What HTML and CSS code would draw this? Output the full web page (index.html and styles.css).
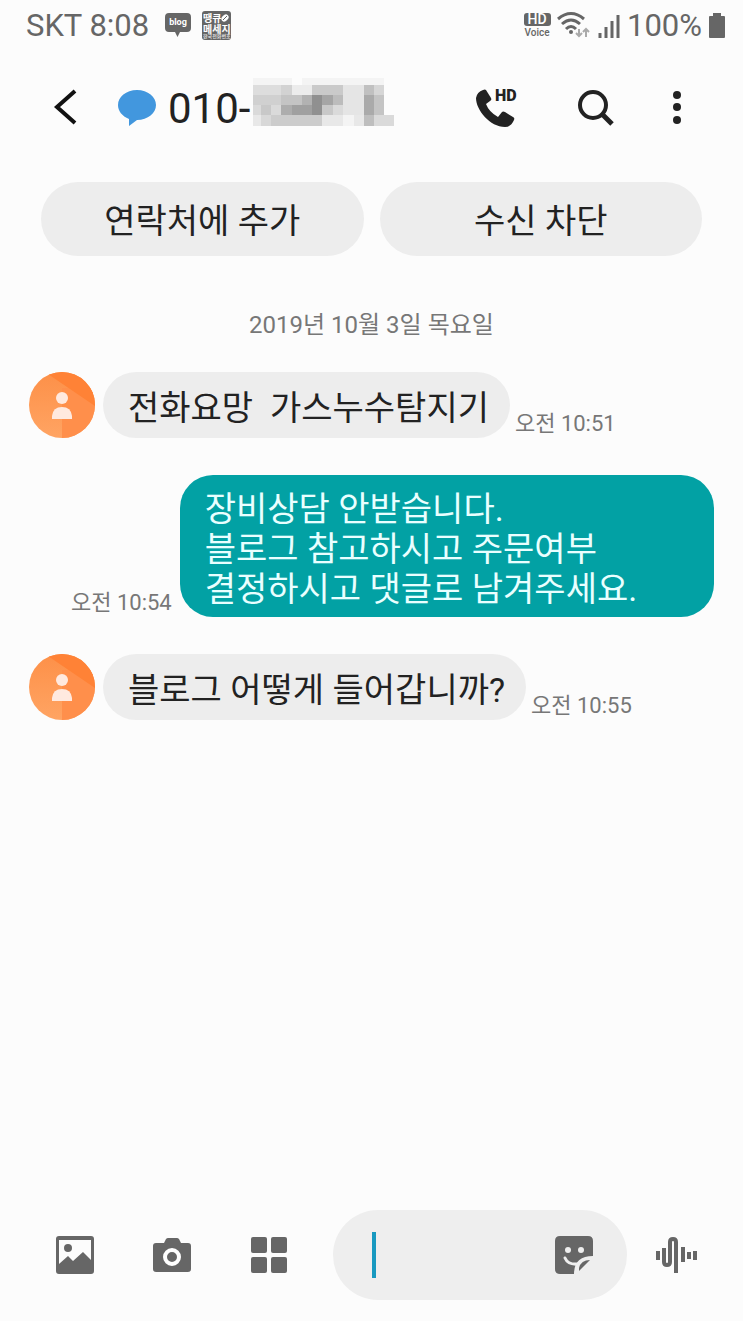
FILE: index.html
```html
<!DOCTYPE html>
<html lang="ko">
<head>
<meta charset="UTF-8">
<meta name="viewport" content="width=device-width, initial-scale=1.0">
<title>메시지</title>
<link rel="stylesheet" href="styles.css">
</head>
<body>

<div class="status-bar">
    <span class="status-text">SKT 8:08</span>
    <svg class="blog-icon" width="28" height="30" viewBox="0 0 28 30" aria-hidden="true">
        <path d="M5 2h18a4 4 0 0 1 4 4v11a4 4 0 0 1-4 4h-7l-2.500 5-2.500-5H5a4 4 0 0 1-4-4V6a4 4 0 0 1 4-4z" fill="#666"/>
        <text x="14" y="14" text-anchor="middle" font-size="9" font-weight="700" fill="#fff">blog</text>
    </svg>
    <svg width="30" height="30" viewBox="0 0 30 30" aria-hidden="true">
        <rect width="29" height="29" x="0" y="0" rx="3" fill="#666"/>
        <text x="1" y="11" font-size="10" font-weight="700" fill="#fff">땡큐</text>
        <ellipse cx="23" cy="7" rx="4" ry="3" transform="rotate(-45 23 7)" fill="#fff"/>
        <path d="M21 9l4-4" stroke="#666"/>
        <text x="1" y="22" font-size="10" font-weight="700" fill="#fff">메세지</text>
        <text x="1" y="27" font-size="5" font-weight="700" fill="#ddd">한국전화번호</text>
    </svg>

    <div class="status-right">
        <svg width="28" height="30" viewBox="0 0 28 30" aria-hidden="true">
            <rect x="1" y="2" width="27" height="13" rx="3" fill="#666"/>
            <text x="14" y="13" text-anchor="middle" font-size="14" font-weight="500" fill="#fff">HD</text>
            <text x="14" y="25" text-anchor="middle" font-size="10" font-weight="500" fill="#666">Voice</text>
        </svg>
        <svg width="34" height="30" viewBox="0 0 34 30" aria-hidden="true">
            <g fill="none" stroke="#666" stroke-width="3">
                <path d="M1 8Q14-3 27 8"/>
                <path d="M5 13Q14 5 23 13"/>
                <path d="M9 18Q14 13 19 18"/>
            </g>
            <circle cx="14" cy="21" r="2" fill="#666"/>
            <path d="M22 18v7m-3-3l3 3 3-3M29 26v-8m-3 3l3-3 3 3" fill="none" stroke="#aaa" stroke-width="2"/>
        </svg>
        <svg width="24" height="30" viewBox="0 0 24 30" aria-hidden="true">
            <path d="M3 22v5M9 16v11M15 10v17M21 4v23" stroke="#666" stroke-width="3"/>
        </svg>
        <span class="status-text">100%</span>
        <svg width="18" height="30" viewBox="0 0 18 30" aria-hidden="true">
            <path d="M5 2h8v3h3q1 0 1 1v20q0 1-1 1H2q-1 0-1-1V6q0-1 1-1h3z" fill="#666"/>
        </svg>
    </div>
</div>

<header class="chat-header">
    <button type="button" class="icon-button" aria-label="뒤로">
        <svg width="24" height="40" viewBox="0 0 24 40">
            <path d="M22 4L4 20l18 16" fill="none" stroke="#111" stroke-width="4"/>
        </svg>
    </button>
    <svg class="contact-icon" width="38" height="38" viewBox="0 0 38 38" aria-hidden="true">
        <path d="M19 1C8 1 0 8 0 16c0 6 4 11 11 14v7l8-6c11 0 19-7 19-15S30 1 19 1z" fill="#4297de"/>
    </svg>
    <h1 class="phone-number">010-</h1>
    <svg class="mosaic" width="142" height="50" viewBox="0 0 142 50" aria-hidden="true" shape-rendering="crispEdges">
        <path d="M0 1h39v7H0zM49 1h82v7H49z" fill="#f4f4f4"/>
        <path d="M0 8h28v10H0z" fill="#ddd"/>
        <path d="M28 8h11v10H28z" fill="#d2d2d2"/>
        <path d="M39 8h20v10H39z" fill="#ececec"/>
        <path d="M59 8h31v10H59z" fill="#cacaca"/>
        <path d="M90 8h21v30H90z" fill="#e5e5e5"/>
        <path d="M111 8h10v10h-10z" fill="#c0c0c0"/>
        <path d="M121 8h10v10h-10z" fill="#d6d6d6"/>
        <path d="M0 18h28v10H0z" fill="#d0d0d0"/>
        <path d="M28 18h21v10H28z" fill="#c4c4c4"/>
        <path d="M49 18h10v10H49z" fill="#b2b2b2"/>
        <path d="M59 18h10v20H59z" fill="#909090"/>
        <path d="M69 18h11v10H69z" fill="#a5a5a5"/>
        <path d="M80 18h10v10H80z" fill="#bcbcbc"/>
        <path d="M111 18h10v20h-10z" fill="#aaa"/>
        <path d="M121 18h10v20h-10z" fill="#c4c4c4"/>
        <path d="M0 28h8v10H0zM18 28h10v10H18zM80 28h10v10H80z" fill="#dadada"/>
        <path d="M8 28h10v10H8zM69 28h11v10H69z" fill="#c8c8c8"/>
        <path d="M28 28h11v10H28z" fill="#adadad"/>
        <path d="M39 28h20v10H39z" fill="#a0a0a0"/>
        <path d="M0 38h8v11H0zM69 38h21v11H69zM101 38h10v11h-10z" fill="#e8e8e8"/>
        <path d="M8 38h10v11H8z" fill="#d8d8d8"/>
        <path d="M18 38h51v11H18z" fill="#ccc"/>
        <path d="M90 38h11v11H90z" fill="#f4f4f4"/>
        <path d="M111 38h10v11h-10z" fill="#bebebe"/>
        <path d="M121 38h20v11h-20z" fill="#dadada"/>
    </svg>
    <div class="header-actions">
        <button type="button" class="icon-button" aria-label="HD 전화">
            <svg width="44" height="42" viewBox="0 0 44 42">
                <path d="M7 4q2-1 3 0l5 8q1 2-1 3l-4 3q3 8 12 13l4-5q1-1 3 0l8 5q2 1 1 3-3 7-9 7C14 41 0 24 0 12q1-6 7-8z" fill="#222"/>
                <text x="19" y="15" font-size="16" font-weight="900" fill="#222">HD</text>
            </svg>
        </button>
        <button type="button" class="icon-button" aria-label="검색">
            <svg width="38" height="42" viewBox="0 0 38 42">
                <circle cx="16" cy="19" r="13" fill="none" stroke="#222" stroke-width="4"/>
                <path d="M25 28l10 10" stroke="#222" stroke-width="5"/>
            </svg>
        </button>
        <button type="button" class="icon-button" aria-label="더보기">
            <svg width="10" height="42" viewBox="0 0 10 42">
                <g fill="#222">
                    <circle cx="5" cy="9" r="4"/>
                    <circle cx="5" cy="21" r="4"/>
                    <circle cx="5" cy="34" r="4"/>
                </g>
            </svg>
        </button>
    </div>
</header>

<div class="contact-actions">
    <button type="button" class="pill-button">연락처에 추가</button>
    <button type="button" class="pill-button">수신 차단</button>
</div>

<main class="messages">
    <p class="date">2019년 10월 3일 목요일</p>

    <div class="message">
        <svg class="avatar" width="66" height="66" viewBox="0 0 66 66" aria-hidden="true">
            <defs>
                <clipPath id="avatarClip"><circle cx="33" cy="33" r="33"/></clipPath>
                <linearGradient id="avatarShade" x1="0" y1="0" x2="0" y2="1">
                    <stop offset="0" stop-color="#fd9048"/>
                    <stop offset="1" stop-color="#ffa463"/>
                </linearGradient>
            </defs>
            <g id="avatarShape" clip-path="url(#avatarClip)">
                <path d="M0 0h66v66H0z" fill="url(#avatarShade)"/>
                <path d="M33 16h33v50H33z" fill="#ff8f4b"/>
                <path d="M16 0h50v34z" fill="#ff8236"/>
                <circle cx="33" cy="26" r="6" fill="#ffe9df"/>
                <path d="M23 47v-3q1-9 10-9t10 9v3z" fill="#ffe9df"/>
            </g>
        </svg>
        <p class="bubble">전화요망&nbsp; 가스누수탐지기</p>
        <time class="time">오전 10:51</time>
    </div>

    <div class="message sent">
        <time class="time">오전 10:54</time>
        <p class="bubble">장비상담 안받습니다.<br>블로그 참고하시고 주문여부<br>결정하시고 댓글로 남겨주세요.</p>
    </div>

    <div class="message">
        <svg class="avatar" width="66" height="66" viewBox="0 0 66 66" aria-hidden="true">
            <use href="#avatarShape"/>
        </svg>
        <p class="bubble">블로그 어떻게 들어갑니까?</p>
        <time class="time">오전 10:55</time>
    </div>
</main>

<footer class="composer">
    <div class="attachments">
        <button type="button" class="icon-button" aria-label="갤러리">
            <svg width="40" height="40" viewBox="0 0 40 40">
                <path d="M4 1h32q3 0 3 3v32q0 3-3 3H4q-3 0-3-3V4q0-3 3-3zm0 4v24l9-8 5 5 10-9 8 8V5z" fill="#666" fill-rule="evenodd"/>
                <circle cx="13" cy="13" r="4" fill="#666"/>
            </svg>
        </button>
        <button type="button" class="icon-button" aria-label="카메라">
            <svg width="40" height="40" viewBox="0 0 40 40">
                <path d="M4 8h8l2-4q1-1 2-1h9q1 0 2 1l2 4h7q3 0 3 3v23q0 3-3 3H4q-3 0-3-3V11q0-3 3-3z" fill="#666"/>
                <circle cx="20" cy="22" r="7" fill="#666" stroke="#fff" stroke-width="4"/>
            </svg>
        </button>
        <button type="button" class="icon-button" aria-label="앱">
            <svg width="40" height="40" viewBox="0 0 40 40">
                <g fill="#666">
                    <rect x="2" y="2" width="16" height="16" rx="2"/>
                    <rect x="22" y="2" width="16" height="16" rx="2"/>
                    <rect x="2" y="22" width="16" height="16" rx="2"/>
                    <rect x="22" y="22" width="16" height="16" rx="2"/>
                </g>
            </svg>
        </button>
    </div>
    <div class="input-box">
        <span class="caret"></span>
        <input type="text" class="message-input" aria-label="메시지 입력">
        <button type="button" class="icon-button" aria-label="스티커">
            <svg width="40" height="40" viewBox="0 0 40 40">
                <path d="M6 1h28q5 0 5 5v15q-19 0-19 18H6q-5 0-5-5V6q0-5 5-5z" fill="#666"/>
                <path d="M25 36v-3q2-8 11-8z" fill="#666"/>
                <circle cx="14" cy="15" r="3" fill="#eee"/>
                <circle cx="27" cy="15" r="3" fill="#eee"/>
                <path d="M11 23q3 7 13 6" fill="none" stroke="#eee" stroke-width="3" stroke-linecap="round"/>
            </svg>
        </button>
    </div>
    <button type="button" class="icon-button" aria-label="음성 메시지">
        <svg width="42" height="40" viewBox="0 0 42 40">
            <g fill="none" stroke="#666" stroke-width="4">
                <path d="M2 16v9M27 12v15M33 17v7M39 16v9"/>
                <path d="M8 13v14q0 3 3 3t3-3V7q0-3 3-3t3 3v31"/>
            </g>
        </svg>
    </button>
</footer>

</body>
</html>
```
FILE: styles.css
```css
* {
    box-sizing: border-box;
}
body {
    display: flex;
    flex-direction: column;
    min-height: 100vh;
    margin: 0;
    background-color: #fcfcfc;
    color: #222;
    font-family: Roboto, "Noto Sans CJK KR", sans-serif;
}
svg {
    display: block;
    flex-shrink: 0;
}
h1, p {
    margin: 0;
}
button {
    border: none;
    color: inherit;
    font-family: inherit;
    cursor: pointer;
}
.icon-button {
    padding: 0;
    background: none;
}

/* status bar */
.status-bar {
    display: flex;
    align-items: center;
    gap: 10px;
    height: 50px;
    padding: 2px 17px 0 26px;
}
.status-text {
    color: #666;
    font-size: 31px;
    line-height: 36px;
}
.blog-icon {
    margin-left: 5px;
}
.status-right {
    display: flex;
    align-items: center;
    gap: 6px;
    margin-left: auto;
}

/* header */
.chat-header {
    display: flex;
    align-items: center;
    height: 114px;
    padding: 0 61px 0 53px;
}
.contact-icon {
    margin: 2px 12px 0 41px;
}
.phone-number {
    padding-top: 4px;
    font-size: 42px;
    font-weight: 400;
    line-height: 50px;
}
.mosaic {
    margin: 0 0 11px 3px;
}
.header-actions {
    display: flex;
    gap: 57px;
    margin-left: auto;
}
.contact-actions {
    display: grid;
    grid-template-columns: 1fr 1fr;
    gap: 16px;
    padding: 18px 41px 0;
}
.pill-button {
    height: 74px;
    padding: 4px 16px 0;
    border-radius: 37px;
    background-color: #ededed;
    font-size: 34px;
    line-height: 40px;
}

/* conversation */
.messages {
    flex: 1;
    padding: 52px 29px 40px;
}
.date {
    margin-bottom: 30px;
    color: #777;
    font-size: 24px;
    line-height: 34px;
    text-align: center;
}
.message {
    display: flex;
    align-items: flex-end;
    margin-bottom: 37px;
}
.bubble {
    min-height: 66px;
    padding: 16px 21px 10px 25px;
    border-radius: 33px;
    background-color: #ededed;
    font-size: 34px;
    line-height: 40px;
}
.avatar {
    margin-right: 8px;
}
.time {
    flex-shrink: 0;
    margin: 0 5px;
    color: #777;
    font-size: 22px;
    line-height: 28px;
}
.sent {
    justify-content: flex-end;
}
.sent .time {
    margin: 0 8px;
}
.sent .bubble {
    width: 78%;
    padding: 14px 25px 8px;
    background-color: #02a1a4;
    color: #e9ffff;
}

/* composer */
.composer {
    display: flex;
    align-items: center;
    padding: 0 45px 21px 55px;
}
.attachments {
    display: flex;
    gap: 57px;
}
.input-box {
    display: flex;
    flex: 1;
    align-items: center;
    min-width: 0;
    height: 90px;
    margin: 0 29px 0 44px;
    padding: 0 33px 0 39px;
    border-radius: 45px;
    background-color: #eee;
}
.caret {
    width: 4px;
    height: 46px;
    background-color: #1899c0;
}
.message-input {
    flex: 1;
    min-width: 0;
    height: 46px;
    padding: 0 8px;
    border: none;
    outline: none;
    background: none;
    font-family: inherit;
    font-size: 34px;
}
```
